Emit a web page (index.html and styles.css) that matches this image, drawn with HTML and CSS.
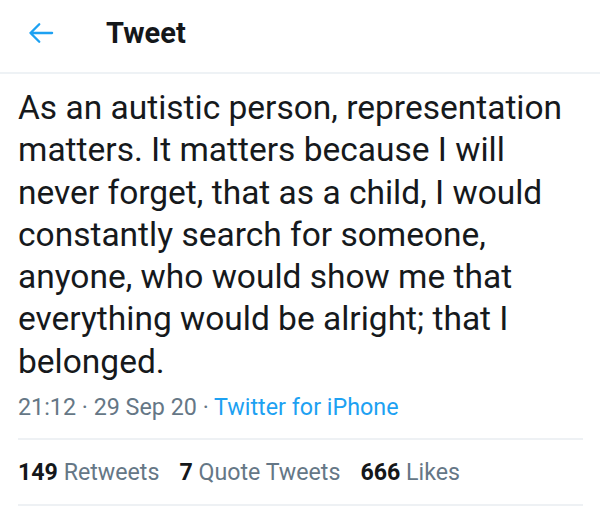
FILE: index.html
```html
<!DOCTYPE html>
<html>
<head>
<meta charset="utf-8">
<link rel="stylesheet" href="styles.css">
</head>
<body>
<div class="page">
  <header class="topbar">
    <span class="back">
      <svg width="28" height="28" viewBox="0 0 24 24"><path d="M21.5 12H3M10.5 4.5L3 12l7.5 7.5" fill="none" stroke="#1da1f2" stroke-width="2" stroke-linecap="round" stroke-linejoin="round"/></svg>
    </span>
    <h1 class="title">Tweet</h1>
  </header>
  <main class="tweet">
    <p class="text">As an autistic person, representation matters. It matters because I will never forget, that as a child, I would constantly search for someone, anyone, who would show me that everything would be alright; that I belonged.</p>
    <div class="meta">21:12 · 29 Sep 20 · <span class="source">Twitter for iPhone</span></div>
    <div class="stats">
      <span class="stat"><b>149</b> Retweets</span>
      <span class="stat"><b>7</b> Quote Tweets</span>
      <span class="stat"><b>666</b> Likes</span>
    </div>
  </main>
</div>
</body>
</html>
```

FILE: styles.css
```css
* { box-sizing: border-box; }
html, body { margin: 0; padding: 0; background: #fff; }
body { font-family: Roboto, "Noto Sans", sans-serif; color: #14171a; }
.page { width: 600px; }
.topbar {
  height: 74px;
  display: flex;
  align-items: center;
  padding: 0 0 6px 27px;
  border-bottom: 2px solid #eef2f5;
}
.back { display: flex; width: 28px; height: 28px; }
.title {
  margin: 0 0 0 51px;
  font-size: 29px;
  font-weight: 700;
  color: #14171a;
}
.tweet { padding: 0 17px 0 18px; }
.text {
  margin: 13px 0 0;
  font-size: 33.5px;
  line-height: 42.3px;
  color: #16191c;
}
.meta {
  margin-top: 10px;
  font-size: 23.3px;
  line-height: 28px;
  color: #657786;
  padding-bottom: 17px;
  border-bottom: 2px solid #eef1f4;
}
.source { color: #1da1f2; }
.stats {
  display: flex;
  gap: 20px;
  height: 66px;
  align-items: center;
  font-size: 23.2px;
  color: #657786;
  border-bottom: 2px solid #eef1f4;
}
.stat b { color: #14171a; font-weight: 700; }
```
